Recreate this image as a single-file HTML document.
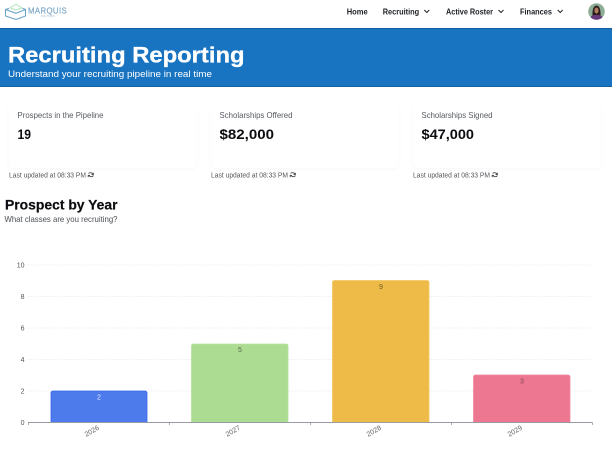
<!DOCTYPE html>
<html><head><meta charset="utf-8"><style>
html,body{margin:0;padding:0;background:#fff;width:612px;height:451px;overflow:hidden}
svg{display:block;font-family:"Liberation Sans",sans-serif;filter:blur(.3px)}
</style></head><body>
<svg width="612" height="451" viewBox="0 0 612 451" xmlns="http://www.w3.org/2000/svg">
<defs><filter id="s" x="-10%" y="-20%" width="120%" height="150%"><feDropShadow dx="0" dy="1" stdDeviation="1.500" flood-color="#000" flood-opacity=".035"/></filter>
<clipPath id="av"><circle cx="596.500" cy="11.500" r="8.300"/></clipPath></defs>
<rect width="612" height="451" fill="#fff"/>
<!-- logo -->
<g fill="none" stroke-width="1.100" stroke-linejoin="round">
<path d="M10 7.800 L16 4.300 L22 7.800 M10 7.800 L16 10 L22 7.800" stroke="#b5e6bf"/>
<path d="M9 8.300 L5.500 9.500 V16 L16 19.500 L25.500 16 V9.500 L22.500 8.300 M5.500 9.500 L16 13.300 L25.500 9.500" stroke="#6da5c9"/>
</g>
<text x="28" y="13.300" font-size="7.800" fill="#7fa9c6" stroke="#7fa9c6" stroke-width=".2" textLength="38.700" lengthAdjust="spacing">MARQUIS</text>
<text x="40.700" y="17" font-size="2.500" fill="#a5bfd2" textLength="14.300" lengthAdjust="spacingAndGlyphs">SOLUTIONS</text>
<!-- nav -->
<g font-size="8.500" font-weight="700" fill="#1d2026">
<text x="346.700" y="14.500" textLength="21" lengthAdjust="spacingAndGlyphs">Home</text>
<text x="382.700" y="14.500" textLength="36.500" lengthAdjust="spacingAndGlyphs">Recruiting</text>
<text x="446" y="14.500" textLength="47" lengthAdjust="spacingAndGlyphs">Active Roster</text>
<text x="520" y="14.500" textLength="32" lengthAdjust="spacingAndGlyphs">Finances</text>
</g>
<g fill="none" stroke="#23262c" stroke-width="1"><path d="M424.300 10 l2.500 2.500 l2.500 -2.500"/><path d="M498.500 10 l2.500 2.500 l2.500 -2.500"/><path d="M557.700 10 l2.500 2.500 l2.500 -2.500"/></g>
<!-- avatar -->
<g clip-path="url(#av)">
<rect x="587" y="2" width="19" height="19" fill="#8fae98"/>
<path d="M592.500 16 Q592 6 596.500 5.500 Q601 6 600.500 16Z" fill="#2c1d1b"/>
<ellipse cx="596.500" cy="10.500" rx="2.100" ry="3" fill="#b07c5e"/>
<path d="M589.500 20 Q590.500 15 594.500 15 L598.500 15 Q602.500 15 603.500 20Z" fill="#68397f"/>
</g>
<!-- hero -->
<rect y="28.500" width="612" height="58.500" fill="#1874c1"/>
<rect y="28" width="612" height="1" fill="#155f9e"/>
<rect y="86" width="612" height="1" fill="#14609f"/>
<text x="8" y="62.300" font-size="22" font-weight="700" fill="#fff" stroke="#fff" stroke-width=".3" textLength="236.500" lengthAdjust="spacingAndGlyphs">Recruiting Reporting</text>
<text x="8" y="76.800" font-size="9" fill="#fff" textLength="204" lengthAdjust="spacingAndGlyphs">Understand your recruiting pipeline in real time</text>
<!-- cards -->
<g fill="#fff" filter="url(#s)">
<rect x="8.500" y="104" width="188.500" height="64" rx="6"/>
<rect x="211" y="104" width="188" height="64" rx="6"/>
<rect x="413" y="104" width="188" height="64" rx="6"/>
</g>
<g font-size="8.500" fill="#565a60">
<text x="17.500" y="118" textLength="86" lengthAdjust="spacingAndGlyphs">Prospects in the Pipeline</text>
<text x="219.500" y="118" textLength="73" lengthAdjust="spacingAndGlyphs">Scholarships Offered</text>
<text x="421.500" y="118" textLength="71" lengthAdjust="spacingAndGlyphs">Scholarships Signed</text>
</g>
<g font-size="14" font-weight="700" fill="#0c0d10">
<text x="17.500" y="139" textLength="13.500" lengthAdjust="spacingAndGlyphs">19</text>
<text x="219.500" y="139" textLength="54.500" lengthAdjust="spacingAndGlyphs">$82,000</text>
<text x="421.500" y="139" textLength="52.500" lengthAdjust="spacingAndGlyphs">$47,000</text>
</g>
<g font-size="7" fill="#53575c">
<text x="9" y="177.500" textLength="77" lengthAdjust="spacingAndGlyphs">Last updated at 08:33 PM</text>
<text x="211" y="177.500" textLength="77" lengthAdjust="spacingAndGlyphs">Last updated at 08:33 PM</text>
<text x="413" y="177.500" textLength="77" lengthAdjust="spacingAndGlyphs">Last updated at 08:33 PM</text>
</g>
<g fill="none" stroke="#44484d" stroke-width=".9">
<path d="M88.500 173.500 a2.700 2.700 0 0 1 4.500 1 M93.500 175.500 a2.700 2.700 0 0 1 -4.800 -.6 M93.300 172.800 v1.800 h-1.800 M88.200 177.200 v-1.800 h1.800"/>
<path d="M290.500 173.500 a2.700 2.700 0 0 1 4.500 1 M295.500 175.500 a2.700 2.700 0 0 1 -4.800 -.6 M295.300 172.800 v1.800 h-1.800 M290.200 177.200 v-1.800 h1.800"/>
<path d="M492.500 173.500 a2.700 2.700 0 0 1 4.500 1 M497.500 175.500 a2.700 2.700 0 0 1 -4.800 -.6 M497.300 172.800 v1.800 h-1.800 M492.200 177.200 v-1.800 h1.800"/>
</g>
<!-- section -->
<text x="5" y="209.500" font-size="13.500" font-weight="700" fill="#0c0d10" stroke="#0c0d10" stroke-width=".2" textLength="112.500" lengthAdjust="spacingAndGlyphs">Prospect by Year</text>
<text x="4.500" y="222" font-size="8.500" fill="#4a4e53" textLength="113" lengthAdjust="spacingAndGlyphs">What classes are you recruiting?</text>
<!-- grid -->
<g stroke="#e9e9ef" stroke-width=".8" stroke-dasharray="1.500 1.500">
<path d="M28 265H592M28 296.500H592M28 328H592M28 359.500H592M28 391H592"/>
</g>
<g font-size="7" fill="#555" text-anchor="end">
<text x="24.500" y="267.500">10</text><text x="24.500" y="299">8</text><text x="24.500" y="330.500">6</text><text x="24.500" y="362">4</text><text x="24.500" y="393.500">2</text><text x="24.500" y="425">0</text>
</g>
<!-- bars -->
<path d="M51 422.500V393a2 2 0 0 1 2-2H145a2 2 0 0 1 2 2V422.500Z" fill="#4e7bec" stroke="#3467e6" stroke-width=".8"/>
<path d="M191.500 422.500V346a2 2 0 0 1 2-2H286a2 2 0 0 1 2 2V422.500Z" fill="#abdc92" stroke="#b6e09f" stroke-width=".8"/>
<path d="M332.500 422.500V282.500a2 2 0 0 1 2-2H427a2 2 0 0 1 2 2V422.500Z" fill="#eeba48" stroke="#f3c661" stroke-width=".8"/>
<path d="M473.500 422.500V377a2 2 0 0 1 2-2H568a2 2 0 0 1 2 2V422.500Z" fill="#ed7791" stroke="#f08aa1" stroke-width=".8"/>
<g font-size="7" text-anchor="middle">
<text x="99" y="399.500" fill="#e6ecfb">2</text>
<text x="240" y="352" fill="#55654b">5</text>
<text x="381" y="289" fill="#6f5a2a">9</text>
<text x="522" y="383.500" fill="#7f4757">3</text>
</g>
<!-- axis -->
<path d="M28 422.500H592.500" stroke="#9a9aa2" stroke-width=".9"/>
<path d="M28.500 422.500v2.500M169.500 422.500v2.500M310.500 422.500v2.500M451.500 422.500v2.500M592.500 422.500v2.500" stroke="#8c8c94" stroke-width=".7"/>
<g font-size="7" fill="#666" text-anchor="middle">
<text transform="translate(93 433) rotate(-30)">2026</text>
<text transform="translate(234 433) rotate(-30)">2027</text>
<text transform="translate(375 433) rotate(-30)">2028</text>
<text transform="translate(516 433) rotate(-30)">2029</text>
</g>
</svg>
</body></html>
